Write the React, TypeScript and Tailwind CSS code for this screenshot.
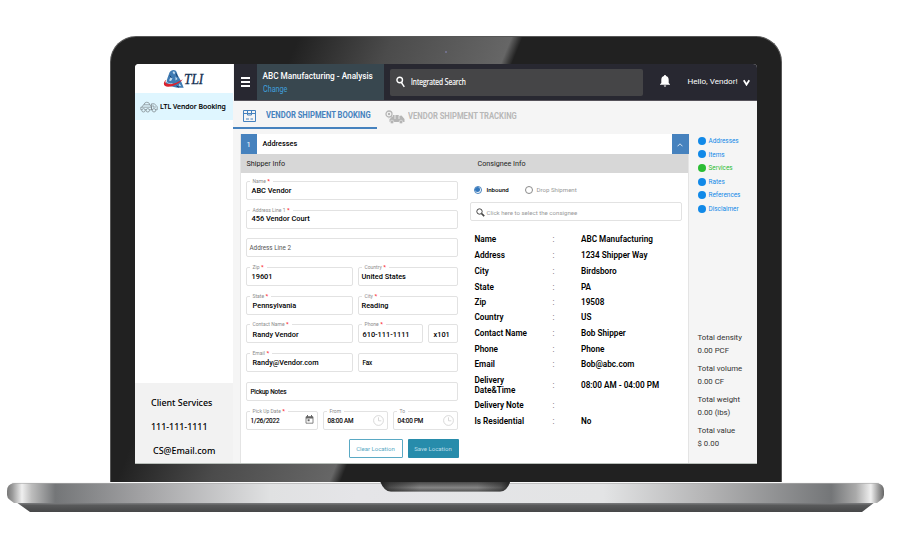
import React from "react";

interface FieldProps {
  label?: string;
  value: string;
  required?: boolean;
  className?: string;
  valueClass?: string;
  children?: React.ReactNode;
}

const Field = ({
  label,
  value,
  required,
  className = "",
  valueClass = "pl-[5px] text-[7.4px] font-medium text-black",
  children,
}: FieldProps) => (
  <div
    className={`relative flex h-[19px] shrink-0 items-center rounded-[2px] border border-[#e2e2e2] bg-white ${className}`}
  >
    {label && (
      <span className="absolute -top-[4px] left-[3px] bg-white px-[3px] text-[5px] leading-[6px] text-[#8c8c8c]">
        {label}
        {required && <b className="text-[6px] text-red-500"> *</b>}
      </span>
    )}
    <span className={`leading-[10px] whitespace-pre ${valueClass}`}>{value}</span>
    {children}
  </div>
);

const small = "pl-[4px] pt-px text-[6.3px] tracking-[-0.02em] text-black [-webkit-text-stroke:0.15px_black]";

const Clock = () => (
  <svg className="mr-[3px] ml-auto h-[11px] w-[11px]" viewBox="0 0 11 11" fill="none" stroke="#cfcfcf" strokeWidth="0.8">
    <circle cx="5.5" cy="5.5" r="4.9" />
    <path d="M5.5 2.3v3.5h2.8" />
  </svg>
);

const Calendar = () => (
  <svg className="mr-[3px] mb-px ml-auto h-[9px] w-[9px]" viewBox="0 0 9 9">
    <path d="M1 1.8h7v6.4H1z" fill="none" stroke="#666" strokeWidth="0.8" />
    <path d="M1 1.5h7v2H1zM2 0h1v2H2zM6 0h1v2H6zM2.6 4.3h2v2h-2z" fill="#666" />
  </svg>
);

const Logo = () => (
  <svg className="h-[20px] w-[21px]" viewBox="0 0 21 20">
    <path d="M4.500 9L6.500 3.600C7.300 2 8.800 1 10.500 1c1.600 0 2.600.7 3.100 2l1.400 3.800 3 5.200 2.700 6.800h-6.500L2.500 16z" fill="#3f7bb3" />
    <path d="M9.500 3l1.500-.8 1.200 1.800-1.200 1.500zM7.500 8.500l2 1-1.500 2.500-2-.5zM12.500 7.500l2 2.500-2 1.500zM16.500 14.500l1.800 2.800-2.500-.5z" fill="#c3dcf0" />
    <path d="M13 4.500l1.500 3.500M6.800 6.500l1.500 2M13.500 17l2.500 1.200" stroke="#16355f" strokeWidth="0.9" />
    <path d="M3.300 10.500C-.7 14 .3 18 5.500 17.700c5.500-.3 11.200-3.700 14.300-7.500-4 2.700-9.300 5-13.400 4.800-3.600-.1-5-1.700-3.100-4.500z" fill="#d8232f" />
    <path d="M3.300 12c.2 2.300 3.500 3 6.200 2.500" stroke="white" strokeWidth="0.5" fill="none" />
  </svg>
);

const TruckOutline = () => (
  <svg className="h-[12px] w-[18px]" viewBox="0 0 18 12" fill="none" stroke="#7a8286" strokeWidth="0.7">
    <path d="M.8 6.2h10.700v2.600H.8zM1.800 6.200L3.500 3.800h6.500l1.500 2.400M3.800 3.800Q4.500 1.300 6.800 1.200T10 3.800M11.500 8.800V2.800h3l2.700 3v3zM13 3.800v2.200h3" />
    <circle cx="3.5" cy="9.3" r="1.7" fill="#dff6ff" />
    <circle cx="7.8" cy="9.3" r="1.7" fill="#dff6ff" />
    <circle cx="14" cy="9.3" r="1.7" fill="#dff6ff" />
  </svg>
);

const Sidebar = () => (
  <aside className="flex w-[98px] shrink-0 flex-col bg-white font-['Noto_Sans','Open_Sans',sans-serif] text-black">
    <div className="flex h-[29px] items-center pl-[28px]">
      <Logo />
      <span className="origin-left scale-x-[0.86] font-['Liberation_Serif',serif] text-[15.5px] leading-none text-[#122f52] italic [-webkit-text-stroke:0.3px_#122f52]">
        TLI
      </span>
    </div>
    <div className="flex h-[27px] items-center bg-[#dff6ff] pl-[5px]">
      <TruckOutline />
      <span className="ml-[2px] origin-left scale-x-[0.92] text-[7.5px] font-medium whitespace-nowrap [-webkit-text-stroke:0.15px_black]">LTL Vendor Booking</span>
    </div>
    <div className="mt-auto flex h-[80px] flex-col bg-[#f2f2f2] pl-[16.5px] text-[8.9px] font-medium">
      <span className="mt-[8px] leading-[24px]">Client Services</span>
      <span className="leading-[24px]">111-111-1111</span>
      <span className="pl-[2px] leading-[24px]">CS@Email.com</span>
    </div>
  </aside>
);

const Header = () => (
  <header className="flex h-[37px] shrink-0 items-center border-b border-[#55525a] bg-[#282831] text-white">
    <div className="flex w-[23px] flex-col items-center gap-[2px] pl-px">
      <i className="h-[2px] w-[9px] bg-white" />
      <i className="h-[2px] w-[9px] bg-white" />
      <i className="h-[2px] w-[9px] bg-white" />
    </div>
    <div className="flex h-full w-[127px] flex-col bg-[#38474f] pl-[6px]">
      <span className="mt-[6px] text-[8.25px] leading-[12px] font-medium whitespace-nowrap">ABC Manufacturing - Analysis</span>
      <span className="origin-left scale-x-[0.86] text-[8.4px] leading-[14px] text-[#3f9fdc]">Change</span>
    </div>
    <div className="ml-[6px] flex h-[27px] w-[253px] items-center rounded-[2px] bg-[#454547] pl-[6px]">
      <svg className="h-[12px] w-[9px]" viewBox="0 0 9 12" fill="none" stroke="white" strokeWidth="1.4">
        <circle cx="3.7" cy="4" r="2.8" />
        <path d="M5.4 6.5L8.3 10.8" />
      </svg>
      <span className="ml-[6px] origin-left scale-x-[0.79] font-['Open_Sans','Noto_Sans',sans-serif] text-[8.4px] whitespace-nowrap [-webkit-text-stroke:0.2px_white]">
        Integrated Search
      </span>
    </div>
    <svg className="-mt-[2px] ml-[17px] h-[12px] w-[10px] shrink-0" viewBox="0 0 10 12" fill="white">
      <path d="M5 0c.6 0 1 .4 1 1 1.8.5 2.7 1.9 2.7 3.7V8L10 9.3v.5H0v-.5L1.3 8V4.7C1.3 2.9 2.2 1.5 4 1c0-.6.4-1 1-1zM3.8 10.4h2.4c0 .8-.5 1.2-1.2 1.2s-1.2-.4-1.2-1.2z" />
    </svg>
    <span className="-mt-[2px] ml-[18px] text-[8.1px] whitespace-nowrap">Hello, Vendor!</span>
    <svg className="ml-[6px] h-[7px] w-[7px] shrink-0" viewBox="0 0 7 7">
      <path d="M.7 1.2L3.5 5.6 6.3 1.2" fill="none" stroke="white" strokeWidth="1.8" />
    </svg>
  </header>
);

const Tabs = () => (
  <nav className="flex h-[33px] shrink-0 items-start text-[8.9px] font-bold">
    <div className="-ml-px flex h-[28px] w-[144px] items-center border-b-2 border-[#4682be] pl-[10px] text-[#4682be]">
      <svg className="mt-[3px] h-[12px] w-[13px] shrink-0" viewBox="0 0 13 12" fill="none" stroke="#4682be">
        <path d="M.5.5h12v11H.5zM.5 3.5h12M4.5.5v4.500h4V.5M3 9h3M7.500 9h2.500" />
      </svg>
      <span className="mt-[4px] ml-[10px] origin-left scale-x-[0.86] whitespace-nowrap">VENDOR SHIPMENT BOOKING</span>
    </div>
    <div className="flex h-[28px] items-center pl-[8px] text-[#b8b8b8]">
      <svg className="mt-[4px] h-[14px] w-[20px] shrink-0" viewBox="0 0 20 14">
        <circle cx="4" cy="4" r="3" fill="none" stroke="#b5b5b5" strokeWidth="1.3" />
        <circle cx="4" cy="4" r="1.2" fill="#b5b5b5" />
        <path d="M2 6.5l2.500 3L7 6.500h1V5h5.500l.5 1 2.500-.5L19.500 9v3H4.500V9z" fill="#b5b5b5" />
        <path d="M10 5v4M14 6v3" stroke="#f5f5f5" strokeWidth="0.8" />
        <circle cx="7" cy="12" r="1.8" fill="#b5b5b5" stroke="#f5f5f5" strokeWidth="0.5" />
        <circle cx="16" cy="12" r="1.8" fill="#b5b5b5" stroke="#f5f5f5" strokeWidth="0.5" />
      </svg>
      <span className="mt-[4px] ml-[3px] origin-left scale-x-[0.86] whitespace-nowrap">VENDOR SHIPMENT TRACKING</span>
    </div>
  </nav>
);

const ShipperForm = () => (
  <div className="flex w-[212px] flex-col gap-[9.7px]">
    <Field label="Name" required value="ABC Vendor" />
    <Field label="Address Line 1" required value="456 Vendor Court" />
    <Field value="Address Line 2" valueClass="pl-[3px] pt-px text-[6.3px] text-[#555]" />
    <div className="flex justify-between">
      <Field label="Zip" required value="19601" className="w-[107px]" valueClass="pl-[5px] pt-px text-[7.4px] font-medium text-black" />
      <Field label="Country" required value="United States" className="w-[100px]" valueClass="pl-[3px] pt-px text-[7.4px] font-medium text-black" />
    </div>
    <div className="flex justify-between">
      <Field label="State" required value="Pennsylvania" className="w-[107px]" valueClass="pl-[6px] pt-px text-[7.4px] font-medium text-black" />
      <Field label="City" required value="Reading" className="w-[100px]" valueClass="pl-[3px] pt-px text-[7.4px] font-medium text-black" />
    </div>
    <div className="flex justify-between">
      <Field label="Contact Name" required value="Randy Vendor" className="w-[107px]" valueClass="pl-[6px] pt-[2px] text-[7.4px] font-medium text-black" />
      <Field label="Phone" required value="610-111-1111" className="w-[65px]" valueClass="pl-[4px] pt-[2px] text-[7.4px] font-medium text-black" />
      <Field value="x101" className="w-[30px]" valueClass="pl-[5px] pt-[2px] text-[7.4px] font-medium text-black" />
    </div>
    <div className="flex justify-between">
      <Field label="Email" required value="Randy@Vendor.com" className="w-[107px]" valueClass="pl-[6px] pt-px text-[7.3px] font-medium text-black" />
      <Field value="Fax" className="w-[100px]" valueClass={small} />
    </div>
    <Field value="Pickup Notes" valueClass={small} />
    <div className="flex justify-between">
      <Field label="Pick Up Date" required value="1/26/2022" className="w-[72px]" valueClass={small}>
        <Calendar />
      </Field>
      <Field label="From" value="08:00 AM" className="w-[65px]" valueClass={small}>
        <Clock />
      </Field>
      <Field label="To" value="04:00 PM" className="w-[65px]" valueClass={small}>
        <Clock />
      </Field>
    </div>
    <div className="-mr-px flex justify-end gap-[5px] text-[6px]">
      <button className="h-[19px] w-[54px] rounded-[1px] border border-[#5aa9c4] bg-white text-[#5aa9c4]">Clear Location</button>
      <button className="h-[19px] w-[51px] rounded-[1px] bg-[#278cab] text-[#b9dde8]">Save Location</button>
    </div>
  </div>
);

const consignee = [
  { label: "Name", value: "ABC Manufacturing", height: 16 },
  { label: "Address", value: "1234 Shipper Way", height: 16 },
  { label: "City", value: "Birdsboro", height: 16 },
  { label: "State", value: "PA", height: 15 },
  { label: "Zip", value: "19508", height: 15 },
  { label: "Country", value: "US", height: 16 },
  { label: "Contact Name", value: "Bob Shipper", height: 16 },
  { label: "Phone", value: "Phone", height: 15 },
  { label: "Email", value: "Bob@abc.com", height: 16 },
  { label: "Delivery\nDate&Time", value: "08:00 AM - 04:00 PM", height: 25 },
  { label: "Delivery Note", value: "", height: 15 },
  { label: "Is Residential", value: "No", height: 17 },
];

const Consignee = () => (
  <div className="flex w-[212px] flex-col">
    <div className="flex h-[17px] items-center text-[6.1px]">
      <span className="ml-[4px] flex h-[8px] w-[8px] items-center justify-center rounded-full border border-[#4682be]">
        <i className="h-[5px] w-[5px] rounded-full bg-[#3478bd]" />
      </span>
      <span className="ml-[5px] w-[38px] font-medium text-black">Inbound</span>
      <span className="h-[8px] w-[8px] rounded-full border border-[#8a8a8a]" />
      <span className="ml-[4px] text-[#999]">Drop Shipment</span>
    </div>
    <div className="mt-[4px] flex h-[19px] items-center rounded-[2px] border border-[#e2e2e2] pl-[5px]">
      <svg className="mt-[2px] h-[9px] w-[9px]" viewBox="0 0 9 9" fill="none" stroke="#444">
        <circle cx="3.5" cy="3.5" r="2.7" />
        <path d="M5.5 5.5L8.2 8.2" strokeWidth="1.7" />
      </svg>
      <span className="mt-[2px] ml-[2px] text-[6.1px] text-[#999]">Click here to select the consignee</span>
    </div>
    <div className="mt-[10px] flex flex-col text-[8.2px] font-semibold text-black">
      {consignee.map((row) => (
        <div key={row.label} className="flex items-center pl-[5px] leading-[10px]" style={{ height: row.height }}>
          <span className="w-[78px] whitespace-pre">{row.label}</span>
          <span className="w-[28.5px] font-normal text-[#555]">:</span>
          <span className="whitespace-nowrap">{row.value}</span>
        </div>
      ))}
    </div>
  </div>
);

const steps = ["Addresses", "Items", "Services", "Rates", "References", "Disclaimer"];

const totals = [
  ["Total density", "0.00 PCF"],
  ["Total volume", "0.00 CF"],
  ["Total weight", "0.00 (lbs)"],
  ["Total value", "$ 0.00"],
];

const Summary = () => (
  <div className="flex w-[68px] flex-col pl-[9px]">
    <ul className="flex flex-col">
      {steps.map((step) => (
        <li
          key={step}
          className={`flex h-[13.6px] items-center gap-[3px] text-[6.4px] ${step === "Services" ? "text-[#2bbd34]" : "text-[#1189e8]"}`}
        >
          <i className="h-[8px] w-[8px] rounded-full bg-current" />
          <span className="pt-[2px]">{step}</span>
        </li>
      ))}
    </ul>
    <dl className="mt-auto mb-[13px] flex flex-col gap-[5.1px] text-[7.8px] leading-[13px] whitespace-nowrap text-[#333]">
      {totals.map(([name, value]) => (
        <div key={name}>
          <dt>{name}</dt>
          <dd>{value}</dd>
        </div>
      ))}
    </dl>
  </div>
);

const Booking = () => (
  <section className="ml-[6px] flex w-[449px] flex-col border-x border-[#e4e4e4] bg-white">
    <div className="-mr-px flex h-[20px] shrink-0 items-center">
      <span className="flex h-full w-[16px] items-center justify-center bg-[#4682be] pt-px text-[7.5px] text-white">1</span>
      <span className="ml-[6px] pt-px text-[7.3px] font-medium text-black">Addresses</span>
      <span className="ml-auto flex h-full w-[17px] items-center justify-center bg-[#4682be]">
        <svg className="mt-[2px] h-[4px] w-[6px]" viewBox="0 0 6 4" fill="none" stroke="white" strokeWidth="0.8">
          <path d="M.5 3.3L3 .8l2.5 2.5" />
        </svg>
      </span>
    </div>
    <div className="flex h-[19px] shrink-0 items-center bg-[#d7d7d7] pt-[2px] pl-[6px] text-[7.2px] text-[#222]">
      <span className="w-[231px]">Shipper Info</span>
      <span>Consignee Info</span>
    </div>
    <div className="flex justify-between pt-[8px] pr-[6px] pl-[5px]">
      <ShipperForm />
      <Consignee />
    </div>
  </section>
);

const Base = () => (
  <svg className="block h-[31px] w-[877px]" viewBox="0 0 877 31">
    <defs>
      <linearGradient id="metal">
        <stop offset="0" stopColor="#777" />
        <stop offset="0.006" stopColor="#999" />
        <stop offset="0.017" stopColor="#efefef" />
        <stop offset="0.028" stopColor="#bdbdbd" />
        <stop offset="0.055" stopColor="#747678" />
        <stop offset="0.15" stopColor="#a0a0a2" />
        <stop offset="0.3" stopColor="#e0e1e2" />
        <stop offset="0.4" stopColor="#e5e5e8" />
        <stop offset="0.68" stopColor="#e3e4e5" />
        <stop offset="0.8" stopColor="#b3b3b4" />
        <stop offset="0.94" stopColor="#747678" />
        <stop offset="0.968" stopColor="#aaa" />
        <stop offset="0.985" stopColor="#efefef" />
        <stop offset="0.994" stopColor="#999" />
        <stop offset="1" stopColor="#666" />
      </linearGradient>
      <linearGradient id="under" x2="0" y2="1">
        <stop offset="0" stopColor="#8a8c8e" />
        <stop offset="0.35" stopColor="#58595a" />
        <stop offset="1" stopColor="#464748" />
      </linearGradient>
      <linearGradient id="notch">
        <stop offset="0" stopColor="#222" />
        <stop offset="0.07" stopColor="#4b4b4b" />
        <stop offset="0.3" stopColor="#858585" />
        <stop offset="0.75" stopColor="#858585" />
        <stop offset="0.93" stopColor="#555" />
        <stop offset="1" stopColor="#222" />
      </linearGradient>
      <linearGradient id="shade" x2="0" y2="1">
        <stop offset="0" stopColor="#222" stopOpacity="0.6" />
        <stop offset="0.6" stopColor="#222" stopOpacity="0" />
        <stop offset="1" stopColor="#222" stopOpacity="0.5" />
      </linearGradient>
    </defs>
    <path d="M9 20h859l-13 10H23z" fill="url(#under)" />
    <path d="M7 1h863q7 1 7 8v4q0 3-3 5l-4 3H7l-4-3q-3-2-3-5V9q0-7 7-8z" fill="url(#metal)" />
    <path d="M5 1.4h867" stroke="#aaa" strokeWidth="0.7" />
    <path d="M373.5 0h129.500q-3 9.500-10 9.500H384q-7 0-10.500-9.500z" fill="url(#notch)" />
    <path d="M373.5 0h129.500q-3 9.500-10 9.500H384q-7 0-10.500-9.500z" fill="url(#shade)" />
  </svg>
);

const App = () => (
  <div className="flex h-[539px] w-[891px] flex-col items-center overflow-hidden bg-white pt-9 font-['Roboto',sans-serif]">
    <div className="relative h-[446px] w-[672px] shrink-0 rounded-t-[26px] border border-b-0 border-[#575757] bg-[linear-gradient(112.3deg,#212121_22%,#4b4b4b_33%,#666_47%,#212121_48.3%)] pt-[27px] pl-[24px]">
      <i className="absolute top-[14px] left-[334px] h-[2px] w-[2px] rounded-full bg-[#77779a]" />
      <div className="flex h-[400px] w-[622px] overflow-hidden rounded-t-[4px] border-b border-[#b9bfba] bg-[#f5f5f5]">
        <Sidebar />
        <div className="ml-px flex min-w-0 flex-1 flex-col">
          <Header />
          <Tabs />
          <main className="flex min-h-0 flex-1">
            <Booking />
            <Summary />
          </main>
        </div>
      </div>
    </div>
    <Base />
  </div>
);

export default App;
